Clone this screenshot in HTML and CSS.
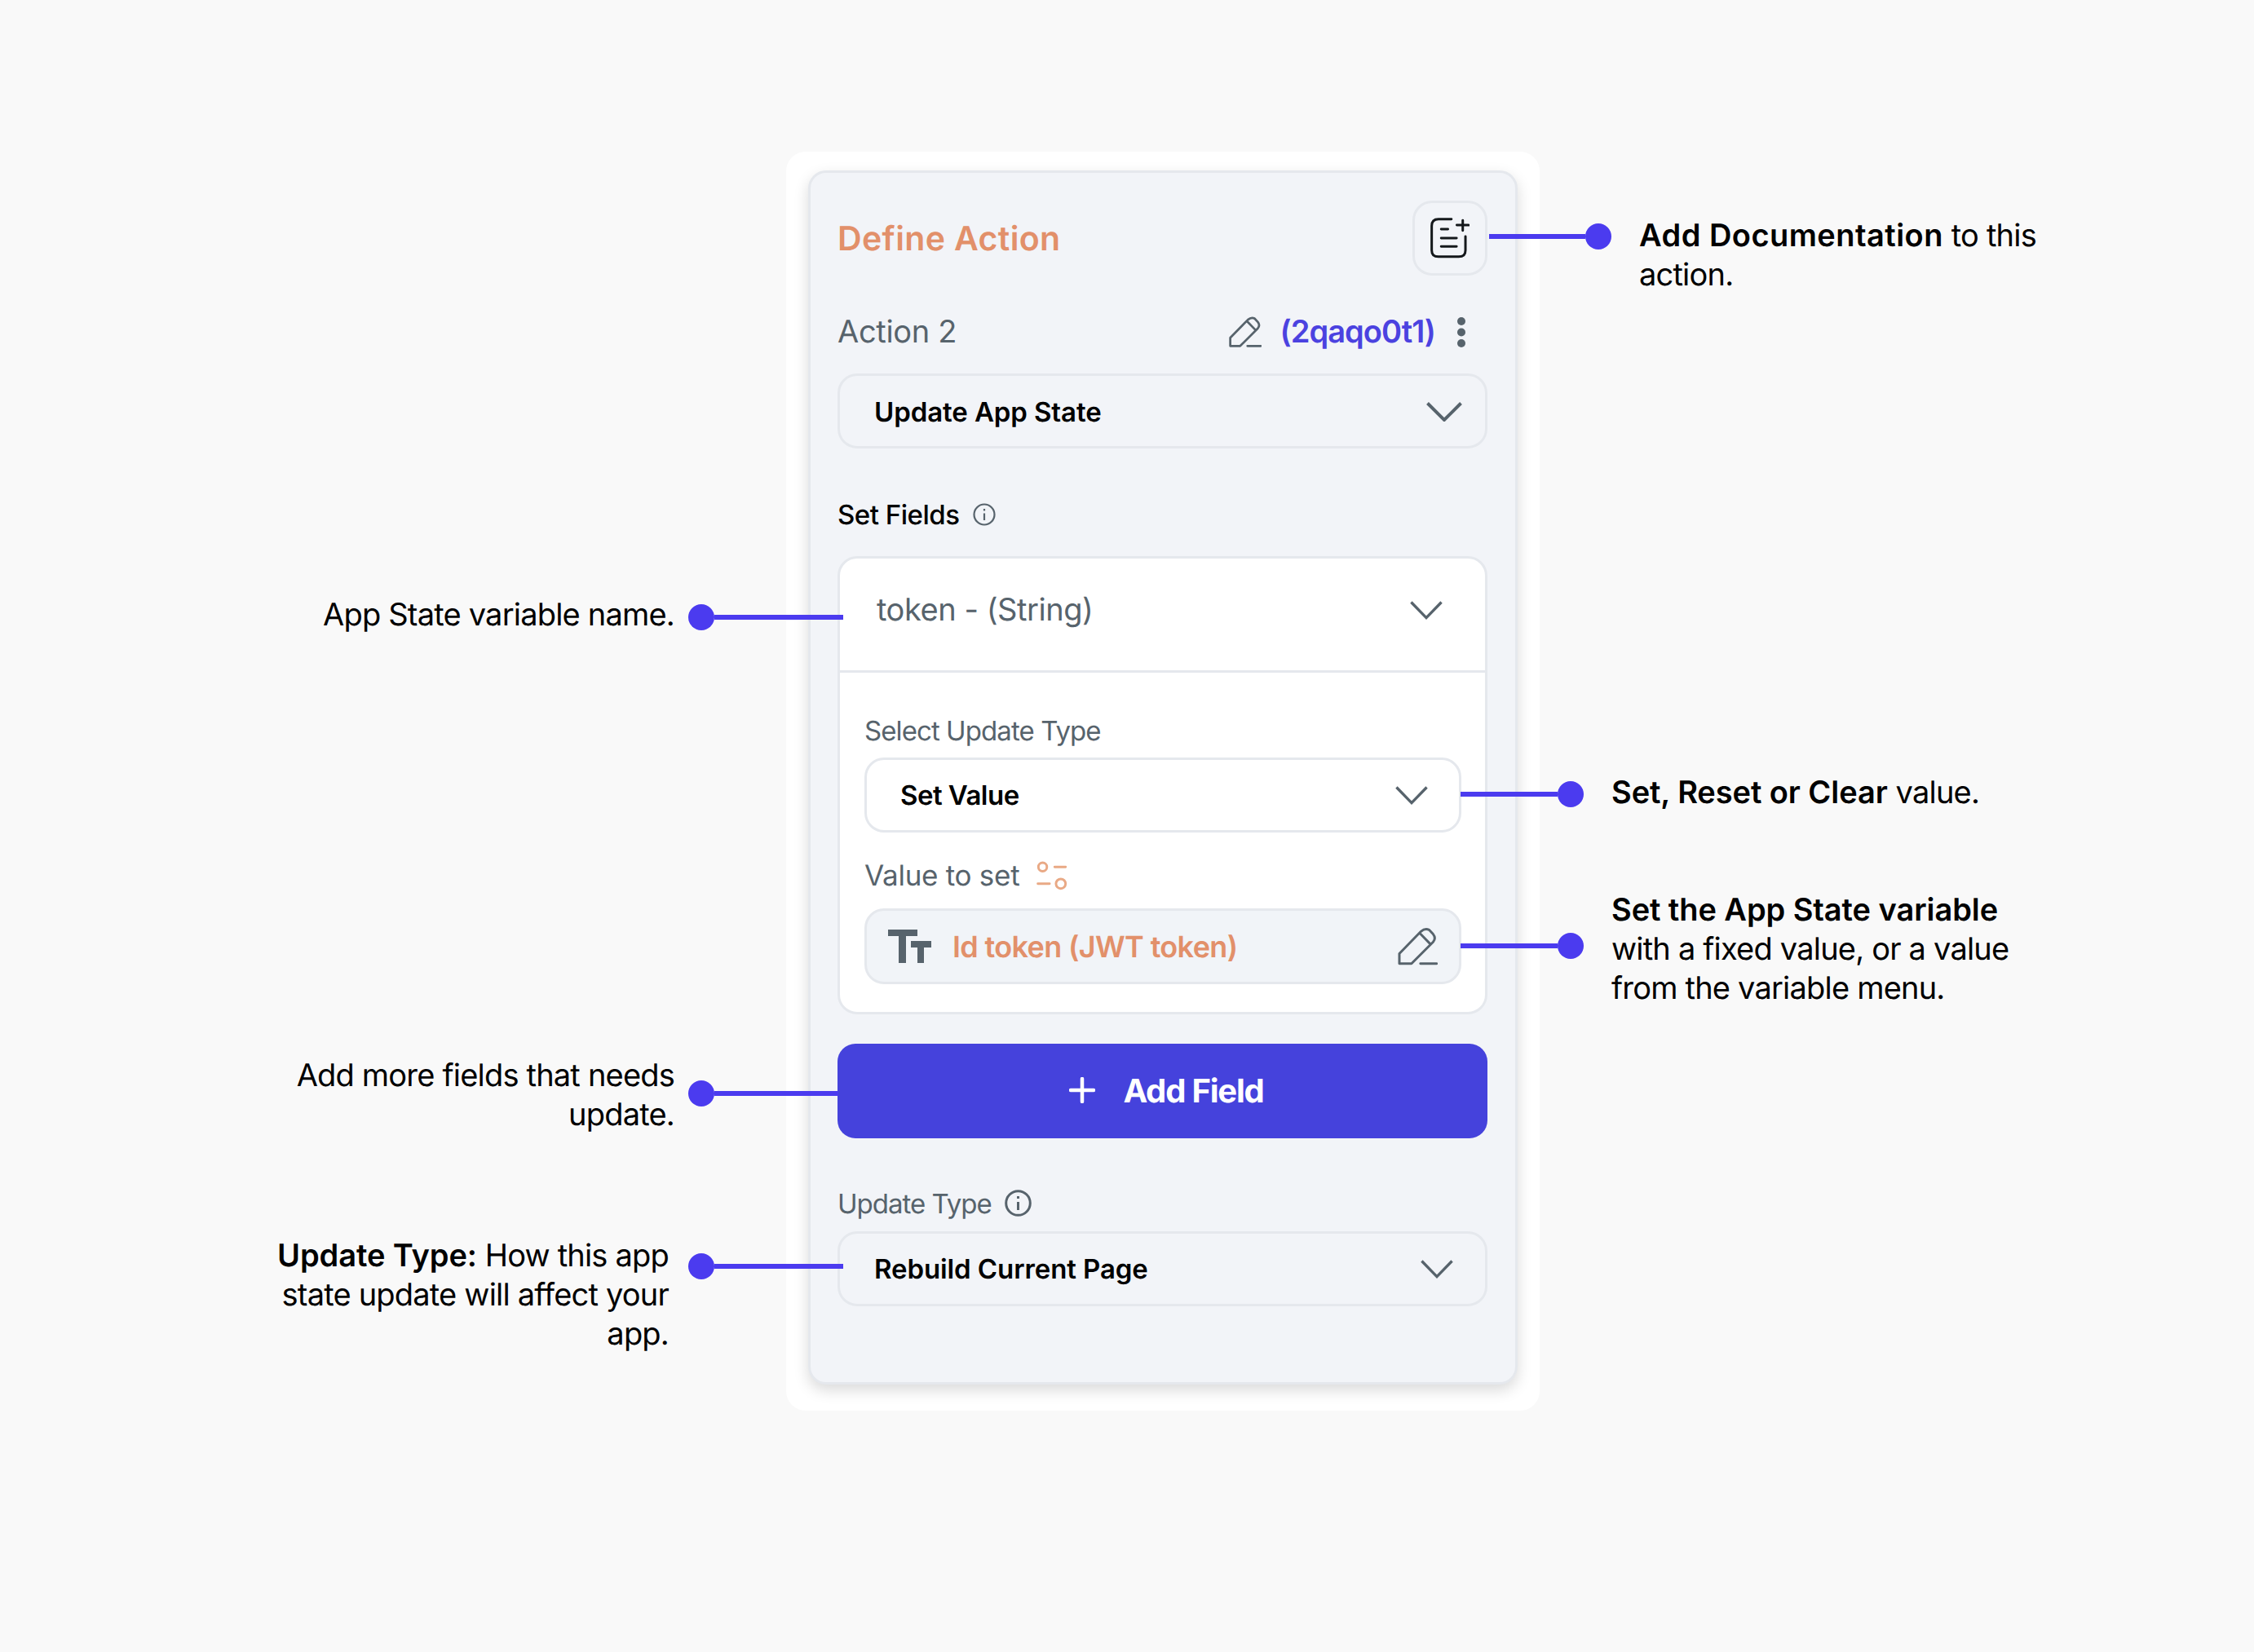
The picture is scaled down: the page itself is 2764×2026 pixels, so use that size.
FILE: index.html
```html
<!DOCTYPE html>
<html lang="en">
<head>
<meta charset="UTF-8">
<meta name="viewport" content="width=device-width, initial-scale=1.0">
<title>Define Action</title>
<link rel="stylesheet" href="styles.css">
</head>
<body>
  <div class="canvas">
    <div class="frame">
      <div class="card">
        <div class="card-head">
          <h2 class="title">Define Action</h2>
          <div class="doc-btn">
            <svg class="doc-icon" viewBox="100 118 145 150" fill="none" stroke="#14181b" stroke-width="9" stroke-linecap="round">
              <path d="M178 123H130Q105 123 105 148V238Q105 262 130 262H205Q230 262 230 238V187"/>
              <path d="M140 160H165M140 193H197M140 224H197M220 127V165M198 145H242"/>
            </svg>
          </div>
        </div>

        <div class="action-row">
          <span class="action-name">Action 2</span>
          <div class="action-id">
            <svg class="pencil pencil-sm" viewBox="74 88 148 140" fill="none" stroke="#57636c" stroke-width="10" stroke-linecap="round" stroke-linejoin="round">
              <path d="M80 222V185L160 103Q175 90 190 97L205 113Q217 128 205 142L125 222ZM158 112L195 150M158 222H218"/>
            </svg>
            <span class="id-text">(2qaqo0t1)</span>
            <svg class="dots" viewBox="0 0 10 37" fill="#57636c">
              <circle cx="5" cy="5" r="5"/><circle cx="5" cy="18.5" r="5"/><circle cx="5" cy="32" r="5"/>
            </svg>
          </div>
        </div>

        <div class="select select-main">
          <span>Update App State</span>
          <svg class="chev chev-lg" viewBox="0 0 44 24" fill="none" stroke="#57636c" stroke-width="4"><path d="M1.5 1.5L22 22L42.5 1.5"/></svg>
        </div>

        <div class="label-row label-fields">
          <span class="label-dark">Set Fields</span>
          <svg class="info info-sm" viewBox="0 0 28 28" fill="none" stroke="#57636c" stroke-width="2.2"><circle cx="14" cy="14" r="12.5"/><path d="M14 12.5V21M14 7V9.5"/></svg>
        </div>

        <div class="field-box">
          <div class="field-head">
            <span class="field-name">token - (String)</span>
            <svg class="chev chev-md" viewBox="0 0 42 24" fill="none" stroke="#57636c" stroke-width="3.5"><path d="M1.5 1.5L21 21.5L40.5 1.5"/></svg>
          </div>
          <div class="field-body">
            <div class="sub-label">Select Update Type</div>
            <div class="select select-white">
              <span>Set Value</span>
              <svg class="chev chev-md" viewBox="0 0 42 24" fill="none" stroke="#57636c" stroke-width="3.5"><path d="M1.5 1.5L21 21.5L40.5 1.5"/></svg>
            </div>
            <div class="value-label">
              <span>Value to set</span>
              <svg class="sliders" viewBox="626 50 122 110" fill="none" stroke="#e9a985" stroke-width="9" stroke-linecap="round">
                <circle cx="652" cy="72" r="16"/><circle cx="720" cy="135" r="18"/><path d="M697 72H738M634 135H678"/>
              </svg>
            </div>
            <div class="value-input">
              <svg class="tt" viewBox="0 0 53 41" fill="#57636c">
                <rect x="0" y="0" width="36" height="8"/><rect x="13" y="0" width="9" height="41"/>
                <rect x="28" y="14" width="25" height="8"/><rect x="36" y="14" width="8" height="27"/>
              </svg>
              <span class="value-text">Id token (JWT token)</span>
              <svg class="pencil pencil-lg" viewBox="74 88 148 140" fill="none" stroke="#57636c" stroke-width="9" stroke-linecap="round" stroke-linejoin="round">
                <path d="M80 222V185L160 103Q175 90 190 97L205 113Q217 128 205 142L125 222ZM158 112L195 150M158 222H218"/>
              </svg>
            </div>
          </div>
        </div>

        <div class="add-btn">
          <svg class="plus" viewBox="0 0 32 32" fill="none" stroke="#fff" stroke-width="4.500" stroke-linecap="round"><path d="M16 2V30M2 16H30"/></svg>
          <span>Add Field</span>
        </div>

        <div class="label-row label-update">
          <span>Update Type</span>
          <svg class="info info-lg" viewBox="0 0 33 33" fill="none" stroke="#57636c" stroke-width="3"><circle cx="16.500" cy="16.500" r="14.800"/><path d="M16.500 15V25M16.500 8V11"/></svg>
        </div>

        <div class="select select-rebuild">
          <span>Rebuild Current Page</span>
          <svg class="chev chev-md" viewBox="0 0 42 24" fill="none" stroke="#57636c" stroke-width="3.5"><path d="M1.5 1.5L21 21.5L40.5 1.5"/></svg>
        </div>
      </div>
    </div>

    <div class="link link-right link-docs"><span class="line"></span><span class="dot"></span></div>
    <p class="note note-docs"><b>Add Documentation</b> to this<br>action.</p>

    <div class="link link-right link-reset"><span class="line"></span><span class="dot"></span></div>
    <p class="note note-reset"><b>Set, Reset or Clear</b> value.</p>

    <div class="link link-right link-value"><span class="line"></span><span class="dot"></span></div>
    <p class="note note-value"><b>Set the App State variable</b><br>with a fixed value, or a value<br>from the variable menu.</p>

    <div class="link link-left link-name"><span class="dot"></span><span class="line"></span></div>
    <p class="note note-left note-name">App State variable name.</p>

    <div class="link link-left link-more"><span class="dot"></span><span class="line"></span></div>
    <p class="note note-left note-more">Add more fields that needs<br>update.</p>

    <div class="link link-left link-type"><span class="dot"></span><span class="line"></span></div>
    <p class="note note-left note-type"><b>Update Type:</b> How this app<br>state update will affect your<br>app.</p>
  </div>
</body>
</html>
```

FILE: styles.css
```css
* {
  box-sizing: border-box;
}

body {
  margin: 0;
  font-family: 'Inter', 'Liberation Sans', sans-serif;
  letter-spacing: -0.03em;
  text-rendering: geometricPrecision;
  background-color: #f9f9f9;
  color: #000;
}

.canvas {
  position: relative;
  width: 2764px;
  height: 2026px;
  padding: 186px 0 0 964px;
  overflow: hidden;
}

.frame {
  width: 924px;
  height: 1544px;
  padding: 23px 27px 0;
  background-color: #fff;
  border-radius: 24px;
}

.card {
  width: 870px;
  height: 1489px;
  padding: 34px 34px 0 33px;
  background-color: #f2f4f8;
  border: 3px solid #e5e8ed;
  border-radius: 22px;
  box-shadow: 0 7px 18px rgba(0, 0, 0, 0.15);
}

.card-head {
  display: flex;
  justify-content: space-between;
  align-items: center;
}

.title {
  margin: 0;
  font-size: 41px;
  font-weight: 600;
  letter-spacing: 0.009em;
  color: #e2906a;
}

.doc-btn {
  display: flex;
  justify-content: center;
  align-items: center;
  width: 92px;
  height: 92px;
  border: 3px solid #e5e8ed;
  border-radius: 24px;
}

.doc-icon {
  width: 48px;
  height: 50px;
}

.action-row {
  display: flex;
  justify-content: space-between;
  align-items: center;
  height: 38px;
  margin-top: 50px;
}

.action-name {
  font-size: 38px;
  letter-spacing: -0.008em;
  color: #57636c;
}

.action-id {
  display: flex;
  align-items: center;
  padding-right: 27px;
}

.id-text {
  margin: 0 27px 0 22px;
  font-size: 38px;
  font-weight: 600;
  letter-spacing: -0.025em;
  color: #4b42e0;
}

.pencil-sm {
  width: 40px;
  height: 38px;
}

.dots {
  width: 10px;
  height: 37px;
}

.select {
  display: flex;
  justify-content: space-between;
  align-items: center;
  height: 92px;
  font-size: 33px;
  font-weight: 600;
  letter-spacing: -0.003em;
  border: 3px solid #e5e8ed;
  border-radius: 24px;
}

.select-main {
  margin-top: 32px;
  padding: 2px 28px 0 42px;
}

.chev {
  display: block;
}

.chev-lg {
  width: 44px;
  height: 24px;
}

.chev-md {
  width: 40px;
  height: 23px;
}

.label-row {
  display: flex;
  align-items: center;
  font-size: 33px;
}

.label-fields {
  height: 28px;
  margin-top: 67px;
  gap: 16px;
}

.label-dark {
  font-weight: 500;
}

.info-sm {
  width: 28px;
  height: 28px;
}

.field-box {
  margin-top: 37px;
  background-color: #fff;
  border: 3px solid #e5e8ed;
  border-radius: 24px;
}

.field-head {
  display: flex;
  justify-content: space-between;
  align-items: center;
  height: 140px;
  padding: 0 52px 11px 45px;
  border-bottom: 3px solid #e5e8ed;
}

.field-name {
  font-size: 38px;
  letter-spacing: -0.012em;
  color: #57636c;
}

.field-body {
  padding: 51px 29px 34px 30px;
}

.sub-label {
  height: 40px;
  font-size: 33px;
  line-height: 40px;
  letter-spacing: -0.028em;
  color: #57636c;
}

.select-white {
  margin-top: 13px;
  padding: 0 38px 0 41px;
  letter-spacing: -0.016em;
}

.value-label {
  display: flex;
  align-items: center;
  gap: 20px;
  height: 40px;
  margin-top: 33px;
  font-size: 35px;
  letter-spacing: -0.008em;
  color: #57636c;
}

.sliders {
  width: 40px;
  height: 36px;
}

.value-input {
  display: flex;
  align-items: center;
  height: 93px;
  margin-top: 20px;
  padding: 0 26px;
  background-color: #f1f4f8;
  border: 3px solid #e5e8ed;
  border-radius: 24px;
}

.tt {
  width: 53px;
  height: 41px;
}

.value-text {
  flex: 1;
  margin-left: 26px;
  font-size: 36px;
  font-weight: 600;
  letter-spacing: -0.018em;
  color: #e2906a;
}

.pencil-lg {
  width: 49px;
  height: 47px;
}

.add-btn {
  display: flex;
  justify-content: center;
  align-items: center;
  gap: 34px;
  height: 116px;
  margin-top: 36px;
  padding: 0 0 2px 10px;
  font-size: 40px;
  font-weight: 700;
  letter-spacing: -0.03em;
  color: #fff;
  background-color: #4542dc;
  border-radius: 22px;
}

.plus {
  width: 32px;
  height: 32px;
}

.label-update {
  height: 35px;
  margin-top: 62px;
  gap: 16px;
  letter-spacing: -0.03em;
  color: #57636c;
}

.info-lg {
  width: 33px;
  height: 33px;
}

.select-rebuild {
  margin-top: 17px;
  padding: 0 39px 0 42px;
}

/* callouts sit on top of the mock, so they are placed on the canvas */
.link {
  position: absolute;
  display: flex;
  align-items: center;
  height: 32px;
}

.dot {
  flex: none;
  width: 32px;
  height: 32px;
  background-color: #4b3bef;
  border-radius: 50%;
}

.line {
  flex: 1;
  height: 6px;
  background-color: #4b3bef;
}

.link-docs {
  left: 1826px;
  top: 274px;
  width: 150px;
}

.link-reset {
  left: 1791px;
  top: 958px;
  width: 151px;
}

.link-value {
  left: 1791px;
  top: 1144px;
  width: 151px;
}

.link-name {
  left: 844px;
  top: 741px;
  width: 190px;
}

.link-more {
  left: 844px;
  top: 1325px;
  width: 184px;
}

.link-type {
  left: 844px;
  top: 1537px;
  width: 190px;
}

.note {
  position: absolute;
  margin: 0;
  font-size: 38px;
  line-height: 48px;
  letter-spacing: -0.021em;
  white-space: nowrap;
}

.note b {
  font-weight: 600;
  letter-spacing: -0.002em;
}

.note-left {
  text-align: right;
}

.note-docs {
  left: 2010px;
  top: 265px;
}

.note-docs b {
  letter-spacing: 0.012em;
}

.note-reset {
  left: 1976px;
  top: 948px;
}

.note-value {
  left: 1976px;
  top: 1092px;
}

.note-name {
  right: 1937px;
  top: 730px;
}

.note-more {
  right: 1937px;
  top: 1295px;
}

.note-type {
  right: 1944px;
  top: 1516px;
}
```
